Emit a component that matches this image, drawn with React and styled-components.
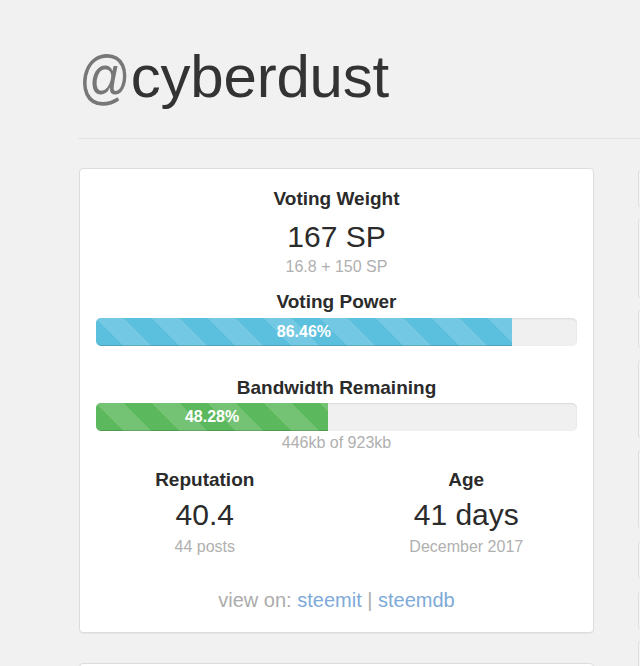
import React from "react";
import styled, { createGlobalStyle } from "styled-components";

const GlobalStyle = createGlobalStyle`
  html, body {
    margin: 0;
    padding: 0;
    overflow: hidden;
    background: #f1f1f1;
    font-family: "Liberation Sans", Arial, sans-serif;
    color: #333;
  }
`;

const account = {
  name: "cyberdust",
  weight: "167 SP",
  weightNote: "16.8 + 150 SP",
  power: 86.46,
  bandwidth: 48.28,
  bandwidthNote: "446kb of 923kb",
  reputation: "40.4",
  posts: "44 posts",
  age: "41 days",
  since: "December 2017",
};

const sideBoxes = [37, 79, 38, 78, 79, 38, 38, 60];

export default function App() {
  return (
    <Page>
      <GlobalStyle />
      <Header>
        <h1>
          <span className="at">@</span>
          {account.name}
        </h1>
      </Header>
      <Main>
        <LeftColumn>
          <Card>
            <Stat>
              <Label>Voting Weight</Label>
              <Value $mt={10}>{account.weight}</Value>
              <Note $mt={3}>{account.weightNote}</Note>
            </Stat>
            <Stat $mt={14}>
              <Label>Voting Power</Label>
              <Meter $mt={5}>
                <Fill $color="#5bc0de" style={{ width: `${account.power}%` }}>
                  {account.power}%
                </Fill>
              </Meter>
            </Stat>
            <Stat $mt={31}>
              <Label>Bandwidth Remaining</Label>
              <Meter $mt={4}>
                <Fill $color="#5cb85c" style={{ width: `${account.bandwidth}%` }}>
                  {account.bandwidth}%
                </Fill>
              </Meter>
              <Note $mt={2}>{account.bandwidthNote}</Note>
            </Stat>
            <StatsRow>
              <Stat>
                <Label>Reputation</Label>
                <Value $mt={7}>{account.reputation}</Value>
                <Note $mt={5}>{account.posts}</Note>
              </Stat>
              <Stat>
                <Label>Age</Label>
                <Value $mt={7}>{account.age}</Value>
                <Note $mt={5}>{account.since}</Note>
              </Stat>
            </StatsRow>
            <Footer>
              view on: <a href="#steemit">steemit</a> | <a href="#steemdb">steemdb</a>
            </Footer>
          </Card>
          <Card $h={120} />
        </LeftColumn>
        <SideColumn>
          {sideBoxes.map((h, i) => (
            <SideBox key={i} $h={h} />
          ))}
        </SideColumn>
      </Main>
    </Page>
  );
}

const Page = styled.div`
  box-sizing: border-box;
  width: 100vw;
  height: 100vh;
  overflow: hidden;
  padding-left: 79px;
`;

const Header = styled.header`
  margin-left: -1px;
  padding: 44px 0 28px 1px;
  border-bottom: 1px solid #e3e3e3;
  h1 {
    margin: 0;
    font-size: 60px;
    line-height: 66px;
    font-weight: 400;
    color: #333;
    letter-spacing: -0.2px;
    white-space: nowrap;
  }
  .at {
    display: inline-block;
    color: #777;
    transform: scaleX(0.85);
    transform-origin: left center;
    margin-right: -9px;
  }
`;

const Main = styled.div`
  display: flex;
  gap: 44px;
  margin-top: 29px;
  align-items: flex-start;
`;

const LeftColumn = styled.div`
  display: flex;
  flex-direction: column;
  gap: 30px;
  width: 515px;
  flex: none;
`;

const Card = styled.div`
  box-sizing: border-box;
  background: #fff;
  border: 1px solid #dcdcdc;
  border-radius: 4px;
  box-shadow: 0 1px 1px rgba(0, 0, 0, 0.04);
  padding: 19px 16px 20px;
  text-align: center;
  min-height: ${(p) => (p.$h ? `${p.$h}px` : "auto")};
`;

const Stat = styled.div`
  margin-top: ${(p) => p.$mt || 0}px;
`;

const Label = styled.div`
  font-size: 19px;
  line-height: 22px;
  font-weight: 700;
  color: #2b2b2b;
`;

const Value = styled.div`
  margin-top: ${(p) => p.$mt || 0}px;
  font-size: 30px;
  line-height: 34px;
  font-weight: 400;
  color: #2b2b2b;
`;

const Note = styled.div`
  margin-top: ${(p) => p.$mt || 0}px;
  font-size: 16px;
  line-height: 20px;
  color: #b0b0b0;
`;

const Meter = styled.div`
  margin-top: ${(p) => p.$mt || 0}px;
  height: 28px;
  border-radius: 5px;
  background: #f0f0f0;
  box-shadow: inset 0 1px 2px rgba(0, 0, 0, 0.1);
  overflow: hidden;
  text-align: left;
`;

const Fill = styled.div`
  height: 100%;
  background-color: ${(p) => p.$color};
  background-image: linear-gradient(
    45deg,
    rgba(255, 255, 255, 0.15) 25%,
    transparent 25%,
    transparent 50%,
    rgba(255, 255, 255, 0.15) 50%,
    rgba(255, 255, 255, 0.15) 75%,
    transparent 75%,
    transparent
  );
  background-size: 56px 56px;
  box-shadow: inset 0 -1px 0 rgba(0, 0, 0, 0.15);
  color: #fff;
  font-size: 16px;
  font-weight: 700;
  line-height: 28px;
  text-align: center;
`;

const StatsRow = styled.div`
  display: grid;
  grid-template-columns: 1fr 1fr;
  margin: 16px -20px 0 -22px;
`;

const Footer = styled.div`
  margin-top: 31px;
  font-size: 20px;
  line-height: 24px;
  color: #acacac;
  a {
    color: #7eaad8;
    text-decoration: none;
  }
`;

const SideColumn = styled.div`
  display: flex;
  flex-direction: column;
  gap: 12px;
  width: 240px;
  flex: none;
  padding-top: 2px;
`;

const SideBox = styled.div`
  height: ${(p) => p.$h}px;
  box-sizing: border-box;
  background: #f6f6f6;
  border: 1px solid #dedede;
  border-radius: 3px;
`;
